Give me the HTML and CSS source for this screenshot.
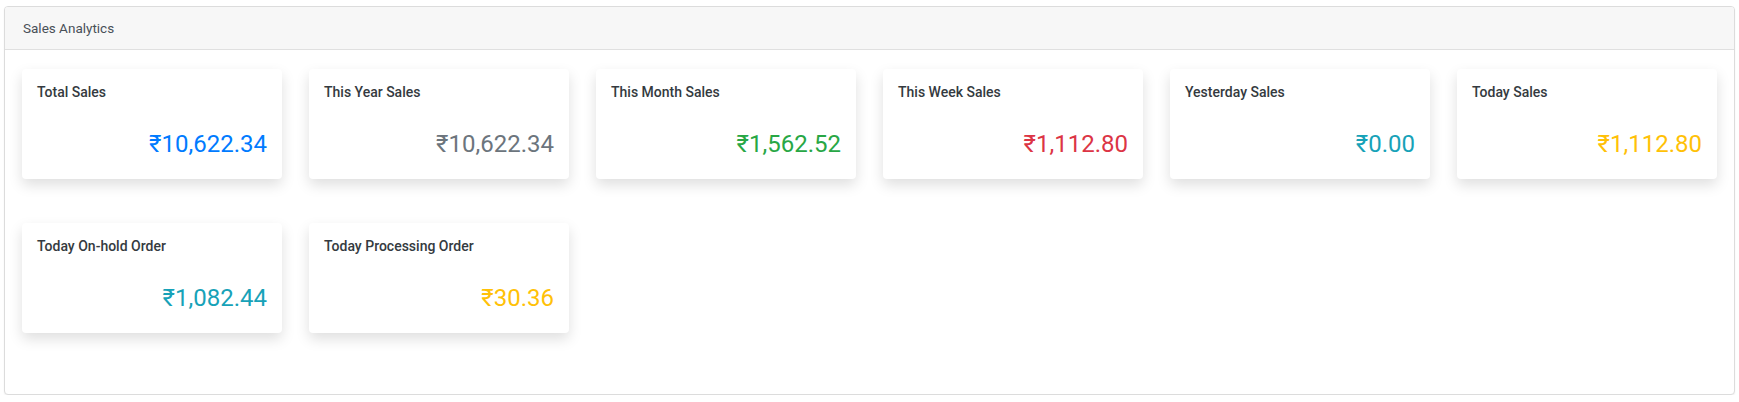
FILE: index.html
```html
<!DOCTYPE html>
<html lang="en">
<head>
<meta charset="utf-8">
<title>Sales Analytics</title>
<link rel="stylesheet" href="styles.css">
</head>
<body>
<section class="panel">
  <header class="panel-header">Sales Analytics</header>
  <div class="panel-body">
    <div class="stat-grid">
      <div class="stat-card">
        <div class="stat-title">Total Sales</div>
        <div class="stat-value text-primary">₹10,622.34</div>
      </div>
      <div class="stat-card">
        <div class="stat-title">This Year Sales</div>
        <div class="stat-value text-secondary">₹10,622.34</div>
      </div>
      <div class="stat-card">
        <div class="stat-title">This Month Sales</div>
        <div class="stat-value text-success">₹1,562.52</div>
      </div>
      <div class="stat-card">
        <div class="stat-title">This Week Sales</div>
        <div class="stat-value text-danger">₹1,112.80</div>
      </div>
      <div class="stat-card">
        <div class="stat-title">Yesterday Sales</div>
        <div class="stat-value text-info">₹0.00</div>
      </div>
      <div class="stat-card">
        <div class="stat-title">Today Sales</div>
        <div class="stat-value text-warning">₹1,112.80</div>
      </div>
      <div class="stat-card">
        <div class="stat-title">Today On-hold Order</div>
        <div class="stat-value text-info">₹1,082.44</div>
      </div>
      <div class="stat-card">
        <div class="stat-title">Today Processing Order</div>
        <div class="stat-value text-warning">₹30.36</div>
      </div>
    </div>
  </div>
</section>
</body>
</html>
```

FILE: styles.css
```css
* {
  box-sizing: border-box;
}

html, body {
  margin: 0;
  padding: 0;
  background: #ffffff;
}

body {
  font-family: Roboto, "Noto Sans", "DejaVu Sans", sans-serif;
  font-size: 14px;
  color: #212529;
}

.panel {
  margin: 6px 4px 0;
  border: 1px solid #dcdcdc;
  border-radius: 4px;
  background: #ffffff;
  box-shadow: 0 1px 2px rgba(0, 0, 0, 0.06);
  overflow: hidden;
}

.panel-header {
  padding: 10px 18px;
  line-height: 22px;
  font-size: 13.5px;
  color: #495057;
  background: #f7f7f7;
  border-bottom: 1px solid #e0e0e0;
}

.panel-body {
  padding: 19px 17px 61px;
}

.stat-grid {
  display: grid;
  grid-template-columns: repeat(6, 1fr);
  column-gap: 27px;
  row-gap: 44px;
}

.stat-card {
  background: #ffffff;
  border-radius: 4px;
  padding: 13px 15px 20px;
  box-shadow: 0 6px 14px rgba(0, 0, 0, 0.13);
}

.stat-title {
  font-size: 14px;
  line-height: 21px;
  font-weight: 500;
  color: #343a40;
  margin-bottom: 27px;
}

.stat-value {
  font-size: 24px;
  line-height: 29px;
  text-align: right;
}

.text-primary { color: #007bff; }
.text-secondary { color: #6c757d; }
.text-success { color: #28a745; }
.text-danger { color: #dc3545; }
.text-info { color: #17a2b8; }
.text-warning { color: #ffc107; }
```
